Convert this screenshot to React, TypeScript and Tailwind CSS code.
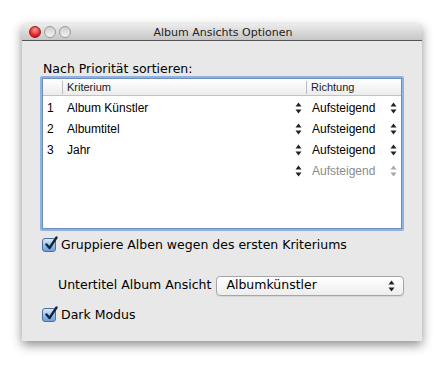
import React from "react";

const ui = { fontFamily: '"Lucida Grande", "DejaVu Sans", sans-serif' };
const helv = { fontFamily: '"Liberation Sans", Arial, sans-serif' };

function Stepper({ dim = false }: { dim?: boolean }) {
  const c = dim ? "#a8a8a8" : "#222";
  return (
    <svg width="7" height="12" viewBox="0 0 7 12" aria-hidden="true">
      <path d="M3.5 0.5 L6.5 4.5 L0.5 4.5 Z" fill={c} />
      <path d="M3.5 11.5 L6.5 7.5 L0.5 7.5 Z" fill={c} />
    </svg>
  );
}

function Check() {
  return (
    <div className="relative h-[14px] w-[14px] shrink-0 rounded-[3px] border border-[#4d6f9f] bg-gradient-to-b from-[#d9e8f8] via-[#9fc2ea] to-[#6e9fd9]">
      <svg
        className="absolute -top-[3px] left-[1px]"
        width="15"
        height="15"
        viewBox="0 0 15 15"
        aria-hidden="true">
        <path
          d="M2.5 8.5 L5.5 12 L12.5 1.5"
          fill="none"
          stroke="#10243f"
          strokeWidth="2.4"
          strokeLinecap="round"
          strokeLinejoin="round"
        />
      </svg>
    </div>
  );
}

const rows = [
  { n: "1", name: "Album Künstler" },
  { n: "2", name: "Albumtitel" },
  { n: "3", name: "Jahr" },
  { n: "", name: "" },
];

export default function App() {
  return (
    <div className="min-h-[369px] w-[443px] bg-white pl-[22px] pt-[24px]">
      <div className="flex h-[317px] w-[400px] flex-col bg-[#e8e8e8] shadow-[0_4px_10px_rgba(0,0,0,0.45)]">
        {/* title bar */}
        <div className="relative flex h-[17px] items-center border-b border-[#555] bg-gradient-to-b from-[#ececec] to-[#c6c6c6]">
          <div className="absolute left-[7px] top-[2px] flex gap-[3px]">
            <span className="h-[12px] w-[12px] rounded-full border border-[#9b1b1b] bg-[radial-gradient(circle_at_50%_30%,#ff9a9a,#e0262a_60%,#a30d10)]" />
            <span className="h-[12px] w-[12px] rounded-full border border-[#9a9a9a] bg-gradient-to-b from-[#cfcfcf] to-[#f2f2f2]" />
            <span className="h-[12px] w-[12px] rounded-full border border-[#9a9a9a] bg-gradient-to-b from-[#cfcfcf] to-[#f2f2f2]" />
          </div>
          <span
            className="w-full pl-[2px] text-center text-[11px] leading-none text-[#222]"
            style={ui}>
            Album Ansichts Optionen
          </span>
        </div>

        <div className="flex flex-col pl-[18px] pr-[18px] text-[12.5px]" style={ui}>
          <div className="mt-[20px] pl-[3px] leading-[15px] text-black">
            Nach Priorität sortieren:
          </div>

          {/* table with focus ring */}
          <div className="h-[155px] rounded-[2px] bg-[#8db2e3] p-[2px]">
            <div className="h-full border border-[#6f8fb8] bg-white" style={helv}>
              <div className="flex h-[17px] items-center border-b border-[#c2c2c2] bg-gradient-to-b from-white to-[#ececec] text-[11px] text-[#222]">
                <div className="h-[13px] w-[20px] border-r border-[#bdbdbd]" />
                <div className="flex-1 pl-[4px]">Kriterium</div>
                <div className="h-[13px] w-[95px] border-l border-[#bdbdbd] pl-[4px] leading-[13px]">
                  Richtung
                </div>
              </div>
              <div className="pt-[1px]">
                {rows.map((r, i) => (
                  <div
                    key={i}
                    className="flex h-[21px] items-center text-[12px] text-black">
                    <div className="w-[24px] pl-[4px]">{r.n}</div>
                    <div className="flex-1">{r.name}</div>
                    <Stepper />
                    <span
                      className={
                        "ml-[10px] w-[78px] " +
                        (i === 3 ? "text-[#8a8a8a]" : "text-black")
                      }>
                      Aufsteigend
                    </span>
                    <div className="w-[11px]">
                      <Stepper dim={i === 3} />
                    </div>
                  </div>
                ))}
              </div>
            </div>
          </div>

          <label className="mt-[5px] flex items-center gap-[5px] pl-[2px] text-black">
            <Check />
            <span>Gruppiere Alben wegen des ersten Kriteriums</span>
          </label>

          <div className="mt-[21px] flex items-center pl-[18px] text-black">
            <span>Untertitel Album Ansicht</span>
            <div className="ml-[5px] flex h-[20px] flex-1 items-center justify-between rounded-[4px] border border-[#a6a6a6] bg-gradient-to-b from-white to-[#ededed] pl-[9px] pr-[8px] shadow-[0_1px_1px_rgba(0,0,0,0.08)]">
              <span>Albumkünstler</span>
              <Stepper />
            </div>
          </div>

          <label className="mt-[10px] flex items-center gap-[5px] pl-[2px] text-black">
            <Check />
            <span>Dark Modus</span>
          </label>
        </div>
      </div>
    </div>
  );
}
